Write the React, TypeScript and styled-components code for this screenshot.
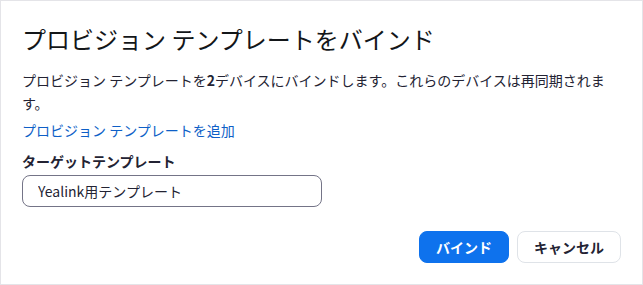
import styled, { createGlobalStyle } from 'styled-components'

const GlobalStyle = createGlobalStyle`
  html, body {
    margin: 0;
    padding: 0;
    background: #ffffff;
  }

  body {
    font-family: 'Noto Sans CJK JP', 'Noto Sans', sans-serif;
    color: #232333;
  }
`

const Dialog = styled.div`
  box-sizing: border-box;
  width: 643px;
  height: 285px;
  border: 1px solid #e4e4e8;
  padding: 22px 21px 0 21px;
  display: flex;
  flex-direction: column;
`

const Title = styled.h2`
  margin: 0;
  font-size: 24px;
  font-weight: 400;
  line-height: 32px;
  color: #131619;
`

const Message = styled.p`
  margin: 14px 0 0 0;
  font-size: 14px;
  line-height: 23px;
  color: #232333;

  strong {
    font-weight: 700;
  }
`

const AddLink = styled.a`
  margin-top: 4px;
  font-size: 14px;
  line-height: 23px;
  color: #0e5fc7;
  text-decoration: none;
  cursor: pointer;
  align-self: flex-start;
`

const Field = styled.div`
  display: flex;
  flex-direction: column;
  gap: 3px;
  margin-top: 8px;
`

const Label = styled.label`
  font-size: 14px;
  font-weight: 700;
  line-height: 22px;
  color: #232333;
`

const TextInput = styled.input`
  box-sizing: border-box;
  width: 300px;
  height: 32px;
  padding: 0 15px;
  border: 1px solid #747487;
  border-radius: 8px;
  font-family: inherit;
  font-size: 14px;
  color: #232333;
  background: #ffffff;
  outline: none;
`

const Footer = styled.div`
  display: flex;
  justify-content: flex-end;
  gap: 8px;
  margin-top: 24px;
`

const Button = styled.button<{ $primary?: boolean }>`
  box-sizing: border-box;
  height: 32px;
  padding: 0 16px;
  border-radius: 8px;
  font-family: inherit;
  font-size: 14px;
  font-weight: 700;
  cursor: pointer;
  border: 1px solid ${(p) => (p.$primary ? '#0e72ed' : '#dfe3e8')};
  background: ${(p) => (p.$primary ? '#0e72ed' : '#ffffff')};
  color: ${(p) => (p.$primary ? '#ffffff' : '#232333')};
`

const App = () => {
  return (
    <>
      <GlobalStyle />
      <Dialog>
        <Title>プロビジョン テンプレートをバインド</Title>
        <Message>
          プロビジョン テンプレートを<strong>2</strong>デバイスにバインドします。これらのデバイスは再同期されます。
        </Message>
        <AddLink>プロビジョン テンプレートを追加</AddLink>
        <Field>
          <Label>ターゲットテンプレート</Label>
          <TextInput defaultValue='Yealink用テンプレート' readOnly />
        </Field>
        <Footer>
          <Button $primary>バインド</Button>
          <Button>キャンセル</Button>
        </Footer>
      </Dialog>
    </>
  )
}

export default App
